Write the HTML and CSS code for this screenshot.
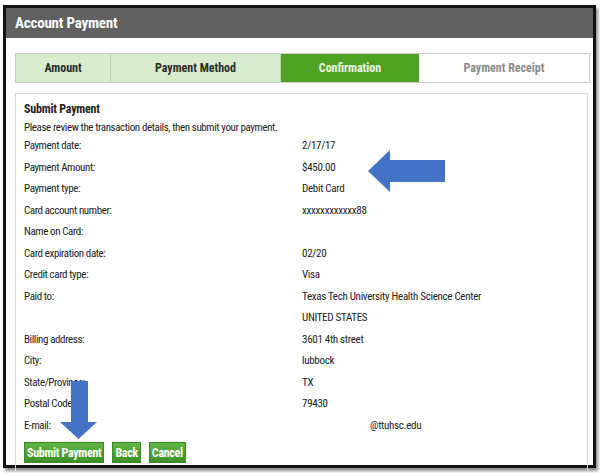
FILE: index.html
```html
<!DOCTYPE html>
<html lang="en">
<head>
    <meta charset="UTF-8">
    <meta name="viewport" content="width=device-width, initial-scale=1.0">
    <title>Account Payment</title>
    <link rel="stylesheet" href="styles.css">
</head>
<body>
    <div class="page">
        <div class="frame">
            <div class="header">Account Payment</div>
            <div class="main">
                <div class="steps">
                    <div class="step done">Amount</div>
                    <div class="step done">Payment Method</div>
                    <div class="step active">Confirmation</div>
                    <div class="step todo">Payment Receipt</div>
                </div>

                <div class="panel">
                    <div class="title">Submit Payment</div>
                    <div class="intro">Please review the transaction details, then submit your payment.</div>

                    <div class="row"><span class="label">Payment date:</span><span class="value">2/17/17</span></div>
                    <div class="row"><span class="label">Payment Amount:</span><span class="value">$450.00</span></div>
                    <div class="row"><span class="label">Payment type:</span><span class="value">Debit Card</span></div>
                    <div class="row"><span class="label">Card account number:</span><span class="value">xxxxxxxxxxxx88</span></div>
                    <div class="row"><span class="label">Name on Card:</span><span class="value"></span></div>
                    <div class="row"><span class="label">Card expiration date:</span><span class="value">02/20</span></div>
                    <div class="row"><span class="label">Credit card type:</span><span class="value">Visa</span></div>
                    <div class="row"><span class="label">Paid to:</span><span class="value">Texas Tech University Health Science Center</span></div>
                    <div class="row"><span class="label"></span><span class="value">UNITED STATES</span></div>
                    <div class="row"><span class="label">Billing address:</span><span class="value">3601 4th street</span></div>
                    <div class="row"><span class="label">City:</span><span class="value">lubbock</span></div>
                    <div class="row"><span class="label">State/Province:</span><span class="value">TX</span></div>
                    <div class="row"><span class="label">Postal Code:</span><span class="value">79430</span></div>
                    <div class="row"><span class="label">E-mail:</span><span class="value email">@ttuhsc.edu</span></div>

                    <div class="buttons">
                        <button type="button">Submit Payment</button>
                        <button type="button">Back</button>
                        <button type="button">Cancel</button>
                    </div>
                </div>
            </div>
        </div>

        <!-- callout arrows drawn over the screenshot -->
        <svg class="arrow arrow-left" width="77" height="42" viewBox="0 0 77 42">
            <polygon points="0,21 22,0 22,10 77,10 77,32 22,32 22,42" fill="#4472c4"/>
        </svg>
        <svg class="arrow arrow-down" width="37" height="58" viewBox="0 0 37 58">
            <polygon points="11,0 28,0 28,41 37,41 18.5,58 0,41 11,41" fill="#4472c4"/>
        </svg>
    </div>
</body>
</html>
```

FILE: styles.css
```css
body {
    margin: 0;
    padding: 0;
    background: white;
    font-family: 'Roboto Condensed', 'Liberation Sans', Arial, sans-serif;
}

.page {
    position: relative;
    width: 600px;
    height: 473px;
    overflow: hidden;
}

.frame {
    margin: 5px 0 0 3px;
    width: 587px;
    height: 457px;
    border: 3px solid #111;
    background: white;
    box-shadow: 2px 3px 3px rgba(0, 0, 0, 0.45);
}

.header {
    height: 30px;
    line-height: 30px;
    padding-left: 9px;
    background: #616161;
    color: white;
    font-weight: bold;
    font-size: 15px;
    letter-spacing: -0.2px;
}

.main {
    padding: 15px 3px 0 9px;
}

.steps {
    display: grid;
    grid-template-columns: 95px 170px 138px 1fr;
    height: 28px;
    border: 1px solid #c9cfc6;
}

.step {
    display: flex;
    justify-content: center;
    align-items: center;
    font-size: 12px;
    font-weight: bold;
}

.step.done {
    background: #d8ebcf;
    color: #2b2b2b;
    border-right: 1px solid #bfd2b6;
}

.step.active {
    background: #4fa123;
    color: #eef7e8;
}

.step.todo {
    background: white;
    color: #8a8a8a;
}

.panel {
    margin-top: 10px;
    width: 555px;
    height: 372px;
    padding: 6px 8px 0 8px;
    border: 1px solid #d9d9d9;
    border-bottom: none;
    font-size: 11px;
    letter-spacing: -0.4px;
    color: #222;
}

.title {
    line-height: 18px;
    font-weight: bold;
    font-size: 12px;
    letter-spacing: -0.2px;
}

.intro {
    line-height: 14px;
    margin-top: 3px;
}

.row {
    display: flex;
    height: 21.5px;
    align-items: center;
}

.label {
    width: 278px;
    flex-shrink: 0;
}

.value {
    letter-spacing: -0.3px;
}

.email {
    padding-left: 68px;
}

.buttons {
    display: flex;
    gap: 8px;
    margin-top: 6px;
}

button {
    height: 21px;
    padding: 0 2px;
    border: 1px solid #3a8a24;
    background: linear-gradient(#62b545, #3f8f27);
    color: white;
    font-family: inherit;
    font-weight: bold;
    font-size: 12px;
    letter-spacing: -0.3px;
    cursor: pointer;
}

.arrow {
    position: absolute;
}

.arrow-left {
    left: 368px;
    top: 150px;
}

.arrow-down {
    left: 60px;
    top: 381px;
}
```
